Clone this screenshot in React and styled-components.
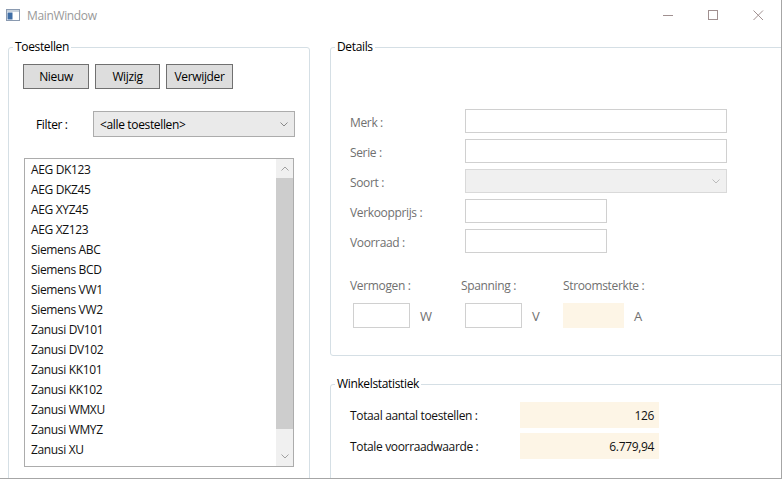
import React from "react";
import styled, { createGlobalStyle } from "styled-components";

const Global = createGlobalStyle`
  html, body { margin: 0; padding: 0; background: #fff; }
  body { font-family: "Open Sans", "Noto Sans", sans-serif; font-size: 12px; letter-spacing: -0.35px; color: #000; }
`;

const Window = styled.div`
  width: 781px;
  height: 478px;
  border-right: 1px solid #a6a6a6;
  border-bottom: 1px solid #a6a6a6;
  overflow: hidden;
  background: #fff;
`;

const TitleBar = styled.div`
  height: 30px;
  display: flex;
  align-items: center;
  padding-left: 6px;
`;

const IconSlot = styled.div`
  width: 14px;
  min-width: 14px;
  height: 12px;
  flex-shrink: 0;
  svg { display: block; }
`;

const Title = styled.span`
  margin-left: 7px;
  color: #999;
  font-size: 12px;
  flex: 1;
`;

const Caption = styled.div`
  width: 45px;
  height: 30px;
  display: flex;
  align-items: center;
  justify-content: center;
`;

const Content = styled.div`
  display: grid;
  grid-template-columns: 302px 470px;
  column-gap: 20px;
  padding: 9px 0 0 8px;
`;

const Group = styled.fieldset`
  margin: 0;
  border: 1px solid #d5dfe5;
  border-radius: 3px;
  padding: 0;
  height: ${(p) => p.$h}px;
  box-sizing: border-box;
  min-width: 0;
`;

const Legend = styled.legend`
  padding: 0 2px;
  margin-left: 4px;
  font-size: 12px;
  line-height: 16px;
`;

const Inner = styled.div`
  padding: ${(p) => p.$pad};
`;

const Column = styled.div`
  display: flex;
  flex-direction: column;
  gap: 20px;
`;

const ButtonRow = styled.div`
  display: flex;
  gap: 6px;
`;

const Button = styled.button`
  width: ${(p) => p.$w}px;
  height: 25px;
  padding: 0;
  background: #dddddd;
  border: 1px solid #707070;
  font: inherit;
  letter-spacing: inherit;
  color: #000;
`;

const FilterRow = styled.div`
  display: flex;
  align-items: center;
  margin-top: 22px;
`;

const FilterLabel = styled.span`
  width: 57px;
  padding-left: 13px;
`;

const Combo = styled.div`
  width: ${(p) => p.$w}px;
  height: ${(p) => p.$h || 24}px;
  box-sizing: border-box;
  border: 1px solid ${(p) => (p.$disabled ? "#d9d9d9" : "#acacac")};
  background: ${(p) => (p.$disabled ? "#f0f0f0" : "#eaeaea")};
  display: flex;
  align-items: center;
  padding-left: 6px;
  padding-right: 6px;
`;

const ComboText = styled.span`
  flex: 1;
`;

const List = styled.div`
  margin-top: 21px;
  margin-left: 1px;
  width: 270px;
  height: 309px;
  box-sizing: border-box;
  border: 1px solid #acacac;
  display: flex;
`;

const Items = styled.div`
  flex: 1;
  padding-top: 1px;
`;

const Item = styled.div`
  height: 20px;
  line-height: 20px;
  padding-left: 6px;
  color: #111;
`;

const Scrollbar = styled.div`
  width: 17px;
  background: #f0f0f0;
  display: flex;
  flex-direction: column;
`;

const ScrollBtn = styled.div`
  height: 19px;
  display: flex;
  align-items: center;
  justify-content: center;
`;

const Thumb = styled.div`
  height: 251px;
  background: #cdcdcd;
`;

const Track = styled.div`
  flex: 1;
`;

const Form = styled.div`
  display: grid;
  grid-template-columns: 115px auto;
  row-gap: 6px;
  align-items: center;
  margin-top: 54px;
`;

const Label = styled.span`
  color: ${(p) => (p.$dark ? "#111" : "#707070")};
  padding-top: ${(p) => p.$drop || 0}px;
`;

const TextBox = styled.div`
  width: ${(p) => p.$w}px;
  height: 24px;
  box-sizing: border-box;
  border: 1px solid #d0d0d0;
  background: #fff;
`;

const ElecRow = styled.div`
  display: flex;
  margin-top: 24px;
`;

const ElecField = styled.div`
  width: ${(p) => p.$w}px;
  display: flex;
  flex-direction: column;
  gap: 9px;
`;

const ElecInput = styled.div`
  display: flex;
  align-items: center;
  gap: 10px;
  padding-left: ${(p) => p.$indent || 0}px;
`;

const Box = styled.div`
  width: ${(p) => p.$w}px;
  height: ${(p) => p.$h || 25}px;
  box-sizing: border-box;
  border: ${(p) => (p.$filled ? "none" : "1px solid #d0d0d0")};
  background: ${(p) => (p.$filled ? "#fdf5e6" : "#fff")};
`;

const Unit = styled.span`
  color: #707070;
  font-size: 13px;
`;

const StatGrid = styled.div`
  display: grid;
  grid-template-columns: 170px 139px;
  row-gap: 5px;
  align-items: center;
  margin-top: 10px;
`;

const StatValue = styled.div`
  height: 26px;
  background: #fdf5e6;
  display: flex;
  align-items: center;
  justify-content: flex-end;
  padding-right: 5px;
  color: #111;
`;

const Chevron = ({ up, color = "#888" }) => (
  <svg width="8" height="5" viewBox="0 0 8 5">
    <path d={up ? "M0.5 4.5 L4 1 L7.5 4.5" : "M0.5 0.5 L4 4 L7.5 0.5"} fill="none" stroke={color} strokeWidth="1" />
  </svg>
);

const AppIcon = () => (
  <svg width="14" height="12" viewBox="0 0 14 12">
    <rect x="0.5" y="0.5" width="13" height="11" fill="#fff" stroke="#8a9ab0" />
    <rect x="1" y="1" width="12" height="2" fill="#c9d3de" />
    <rect x="1.5" y="3.5" width="5" height="7" fill="#3f6ea6" />
  </svg>
);

const devices = [
  "AEG DK123", "AEG DKZ45", "AEG XYZ45", "AEG XZ123", "Siemens ABC", "Siemens BCD",
  "Siemens VW1", "Siemens VW2", "Zanusi DV101", "Zanusi DV102", "Zanusi KK101",
  "Zanusi KK102", "Zanusi WMXU", "Zanusi WMYZ", "Zanusi XU",
];

export default function App() {
  return (
    <Window>
      <Global />
      <TitleBar>
        <IconSlot><AppIcon /></IconSlot>
        <Title>MainWindow</Title>
        <Caption>
          <svg width="11" height="11" viewBox="0 0 11 11"><path d="M0 5.5 H10" stroke="#a09090" /></svg>
        </Caption>
        <Caption>
          <svg width="11" height="11" viewBox="0 0 11 11"><rect x="0.5" y="0.5" width="9" height="9" fill="none" stroke="#a09090" /></svg>
        </Caption>
        <Caption>
          <svg width="11" height="11" viewBox="0 0 11 11"><path d="M0.5 0.5 L10 10 M10 0.5 L0.5 10" stroke="#a09090" /></svg>
        </Caption>
      </TitleBar>
      <Content>
        <Group $h={460}>
          <Legend>Toestellen</Legend>
          <Inner $pad="9px 0 0 14px">
            <ButtonRow>
              <Button $w={66}>Nieuw</Button>
              <Button $w={65}>Wijzig</Button>
              <Button $w={67}>Verwijder</Button>
            </ButtonRow>
            <FilterRow>
              <FilterLabel>Filter :</FilterLabel>
              <Combo $w={202} $h={26}>
                <ComboText>&lt;alle toestellen&gt;</ComboText>
                <Chevron />
              </Combo>
            </FilterRow>
            <List>
              <Items>
                {devices.map((d) => (
                  <Item key={d}>{d}</Item>
                ))}
              </Items>
              <Scrollbar>
                <ScrollBtn><Chevron up color="#a0a0a0" /></ScrollBtn>
                <Thumb />
                <Track />
                <ScrollBtn><Chevron color="#a0a0a0" /></ScrollBtn>
              </Scrollbar>
            </List>
          </Inner>
        </Group>
        <Column>
          <Group $h={317}>
            <Legend>Details</Legend>
            <Inner $pad="0 0 0 19px">
              <Form>
                <Label $drop={3}>Merk :</Label>
                <TextBox $w={262} />
                <Label $drop={3}>Serie :</Label>
                <TextBox $w={262} />
                <Label $drop={3}>Soort :</Label>
                <Combo $w={262} $disabled>
                  <ComboText />
                  <Chevron color="#bbb" />
                </Combo>
                <Label $drop={3}>Verkoopprijs :</Label>
                <TextBox $w={142} />
                <Label $drop={3}>Voorraad :</Label>
                <TextBox $w={142} />
              </Form>
              <ElecRow>
                <ElecField $w={111}>
                  <Label>Vermogen :</Label>
                  <ElecInput $indent={3}>
                    <Box $w={57} $h={25} />
                    <Unit>W</Unit>
                  </ElecInput>
                </ElecField>
                <ElecField $w={102}>
                  <Label>Spanning :</Label>
                  <ElecInput $indent={4}>
                    <Box $w={57} $h={25} />
                    <Unit>V</Unit>
                  </ElecInput>
                </ElecField>
                <ElecField $w={120}>
                  <Label>Stroomsterkte :</Label>
                  <ElecInput>
                    <Box $w={61} $h={25} $filled />
                    <Unit>A</Unit>
                  </ElecInput>
                </ElecField>
              </ElecRow>
            </Inner>
          </Group>
          <Group $h={120}>
            <Legend>Winkelstatistiek</Legend>
            <Inner $pad="0 0 0 19px">
              <StatGrid>
                <Label $dark>Totaal aantal toestellen :</Label>
                <StatValue>126</StatValue>
                <Label $dark>Totale voorraadwaarde :</Label>
                <StatValue>6.779,94</StatValue>
              </StatGrid>
            </Inner>
          </Group>
        </Column>
      </Content>
    </Window>
  );
}
